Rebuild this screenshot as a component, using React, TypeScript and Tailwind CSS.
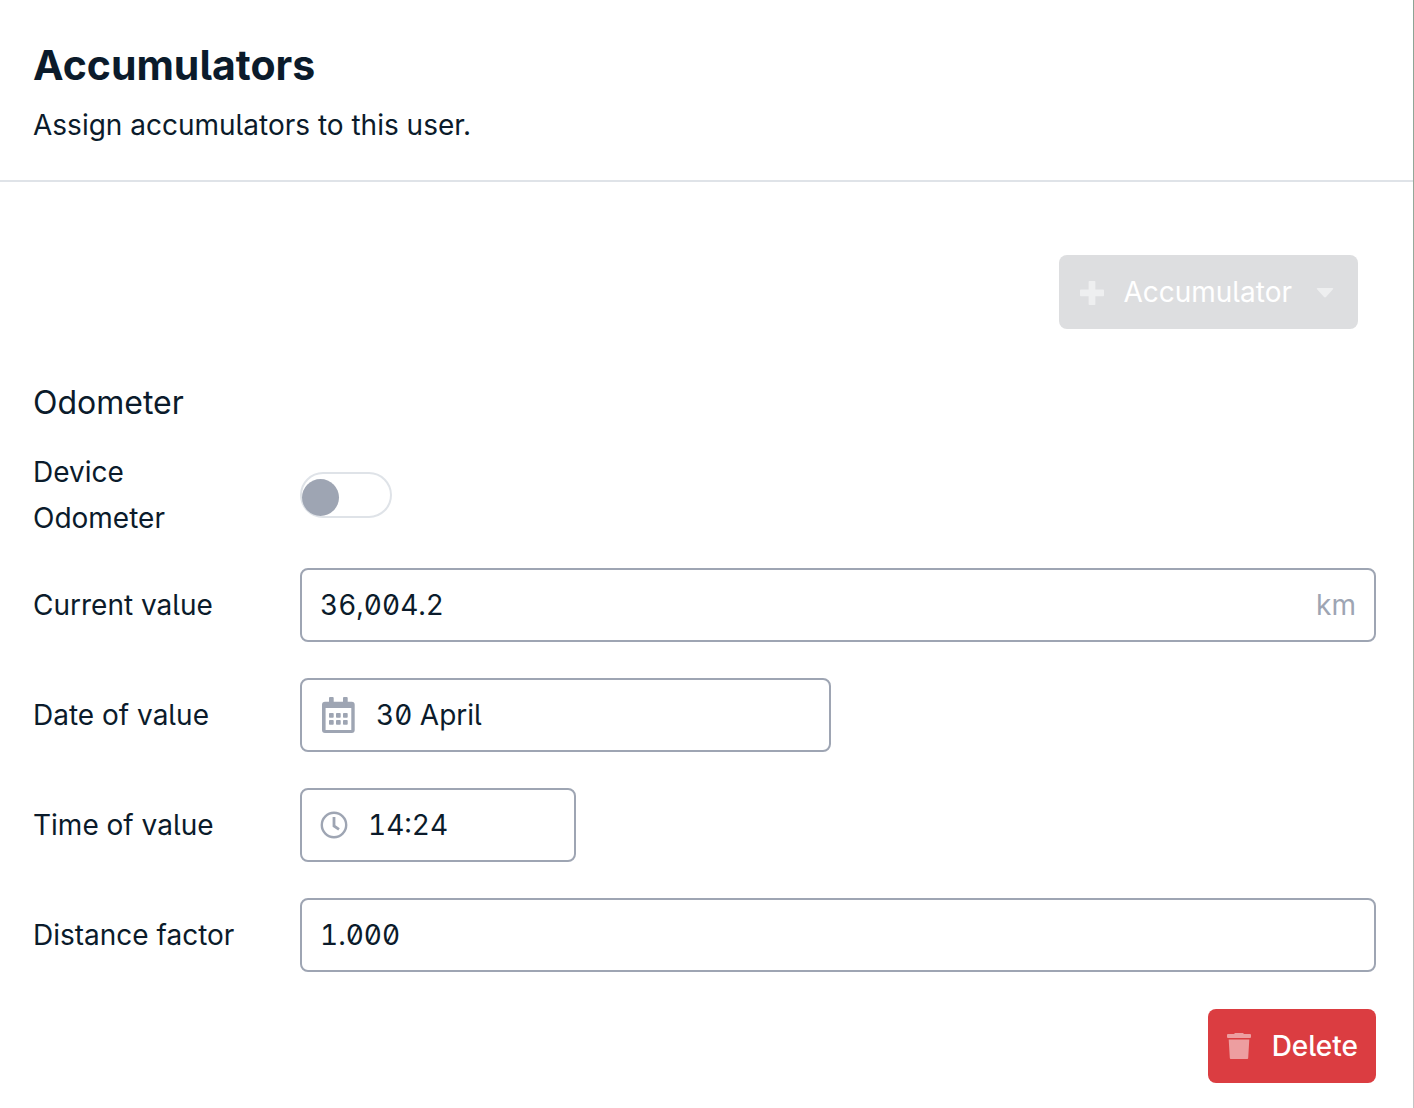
import React, { useState } from "react";

const CalendarIcon = () => (
  <svg aria-hidden="true" viewBox="-2 0 36 36" className="w-9 h-9 shrink-0 fill-[#9ea5b3]">
    <path
      fillRule="evenodd"
      d="M7 1a1 1 0 0 1 1-1h2.700a1 1 0 0 1 1 1v3.700H21V1a1 1 0 0 1 1-1h2.700a1 1 0 0 1 1 1v3.700h4a3 3 0 0 1 3 3V33a3 3 0 0 1-3 3H3a3 3 0 0 1-3-3V7.700a3 3 0 0 1 3-3h4V1ZM3.600 11v22h25.700V11H3.600Z"
    />
    <rect x="7" y="16" width="4.7" height="4.7" rx=".8" />
    <rect x="14" y="16" width="4.7" height="4.7" rx=".8" />
    <rect x="21" y="16" width="4.7" height="4.7" rx=".8" />
    <rect x="7" y="23" width="4.7" height="4.7" rx=".8" />
    <rect x="14" y="23" width="4.7" height="4.7" rx=".8" />
    <rect x="21" y="23" width="4.7" height="4.7" rx=".8" />
  </svg>
);

const ClockIcon = () => (
  <svg
    aria-hidden="true"
    viewBox="0 0 28 28"
    className="w-7 h-7 shrink-0 fill-none stroke-[#9ea5b3]"
  >
    <circle cx="14" cy="14" r="12.2" strokeWidth="2.4" />
    <path d="M14 6v9l5 3.4" strokeWidth="2.8" />
  </svg>
);

const PlusIcon = () => (
  <svg aria-hidden="true" viewBox="0 0 26 26" className="w-[26px] h-[26px] fill-white/50">
    <path d="M10.400 2h5.200a.8.800 0 0 1 .8.800v7.600h7.800a.8.800 0 0 1 .8.800v5.200a.8.800 0 0 1-.8.800h-7.800v8a.8.800 0 0 1-.8.800h-5.200a.8.800 0 0 1-.8-.8v-8H1.800a.8.800 0 0 1-.8-.8v-5.200a.8.800 0 0 1 .8-.8h7.800V2.800a.8.800 0 0 1 .8-.8Z" />
  </svg>
);

const CaretIcon = () => (
  <svg aria-hidden="true" viewBox="0 0 18 12" className="w-[18px] h-3 fill-white/50">
    <path d="M1.500 2h15c.8 0 1 .8.500 1.300L10 11c-.6.600-1.400.600-2 0L1 3.300C.5 2.800.7 2 1.500 2Z" />
  </svg>
);

const TrashIcon = () => (
  <svg aria-hidden="true" viewBox="0 0 26 26" className="w-[26px] h-[26px] fill-white/50">
    <path d="M2 1h6l1-1h8l1 1h6a1 1 0 0 1 1 1v2a1 1 0 0 1-1 1H2a1 1 0 0 1-1-1V2a1 1 0 0 1 1-1Z" />
    <path d="M2.700 6.500h20.600L22.200 25a1 1 0 0 1-1 1H4.800a1 1 0 0 1-1-1L2.700 6.500Z" />
  </svg>
);

const Field = ({
  id,
  label,
  value,
  width,
  icon,
  unit,
}: {
  id: string;
  label: string;
  value: string;
  width: string;
  icon?: React.ReactNode;
  unit?: string;
}) => {
  const [text, setText] = useState(value);

  return (
    <div className="flex items-center">
      <label htmlFor={id} className="w-[267px] shrink-0">
        {label}
      </label>
      <div
        className={`${width} h-[74px] min-w-0 px-[18px] flex items-center gap-5 rounded-lg border-2 border-[#9ea5b3] bg-white`}
      >
        {icon}
        <input
          id={id}
          type="text"
          value={text}
          onChange={(e) => setText(e.target.value)}
          className="flex-1 min-w-0 bg-transparent outline-none [font-feature-settings:'zero','cv05','tnum']"
        />
        {unit && <span className="text-[#9ea5b3]">{unit}</span>}
      </div>
    </div>
  );
};

const App = () => {
  const [device, setDevice] = useState(false);

  return (
    <div className="flex min-h-screen bg-white font-['Inter',sans-serif] text-[28px] leading-[46px] text-[#0b1b2b] [font-feature-settings:'zero','cv05']">
      <main className="flex-1 min-w-0">
        <header className="px-[33px] pt-9 pb-8 border-b-2 border-[#dfe3e8]">
          <h1 className="text-[41px] leading-[58px] font-bold">Accumulators</h1>
          <p className="mt-2">Assign accumulators to this user.</p>
        </header>

        <div className="pl-[33px] pr-[37px] pt-[73px] pb-6">
          <div className="flex justify-end pr-[18px]">
            <button
              type="button"
              disabled
              className="h-[74px] pl-5 pr-6 flex items-center rounded-lg bg-[#dddee0] text-white"
            >
              <PlusIcon />
              <span className="ml-[18px] mr-6">Accumulator</span>
              <CaretIcon />
            </button>
          </div>

          <h2 className="mt-[51px] text-[32px] leading-[46px]">Odometer</h2>

          <div className="mt-[23px] flex items-center">
            <label htmlFor="device" className="w-[267px] pr-24 shrink-0">
              Device Odometer
            </label>
            <input
              id="device"
              type="checkbox"
              role="switch"
              checked={device}
              onChange={(e) => setDevice(e.target.checked)}
              className="appearance-none w-[92px] h-[46px] pt-[5px] rounded-full border-2 border-[#dfe3e8] bg-white cursor-pointer before:block before:w-[37px] before:h-[37px] before:rounded-full before:bg-[#9ea5b3] checked:before:ml-auto"
            />
          </div>

          <div className="mt-[27px] flex flex-col gap-9">
            <Field id="current" label="Current value" value="36,004.2" width="flex-1" unit="km" />
            <Field
              id="date"
              label="Date of value"
              value="30 April"
              width="w-[531px]"
              icon={<CalendarIcon />}
            />
            <Field
              id="time"
              label="Time of value"
              value="14:24"
              width="w-[276px]"
              icon={<ClockIcon />}
            />
            <Field id="factor" label="Distance factor" value="1.000" width="flex-1" />
          </div>

          <div className="mt-[37px] flex justify-end">
            <button
              type="button"
              className="h-[74px] px-[18px] flex items-center gap-5 rounded-lg bg-[#db3d41] font-medium text-white cursor-pointer"
            >
              <TrashIcon />
              Delete
            </button>
          </div>
        </div>
      </main>
      <div className="w-px bg-linear-to-b from-[#8ba394] via-[#a3b0a3] to-[#c4c4c4]" />
    </div>
  );
};

export default App;
